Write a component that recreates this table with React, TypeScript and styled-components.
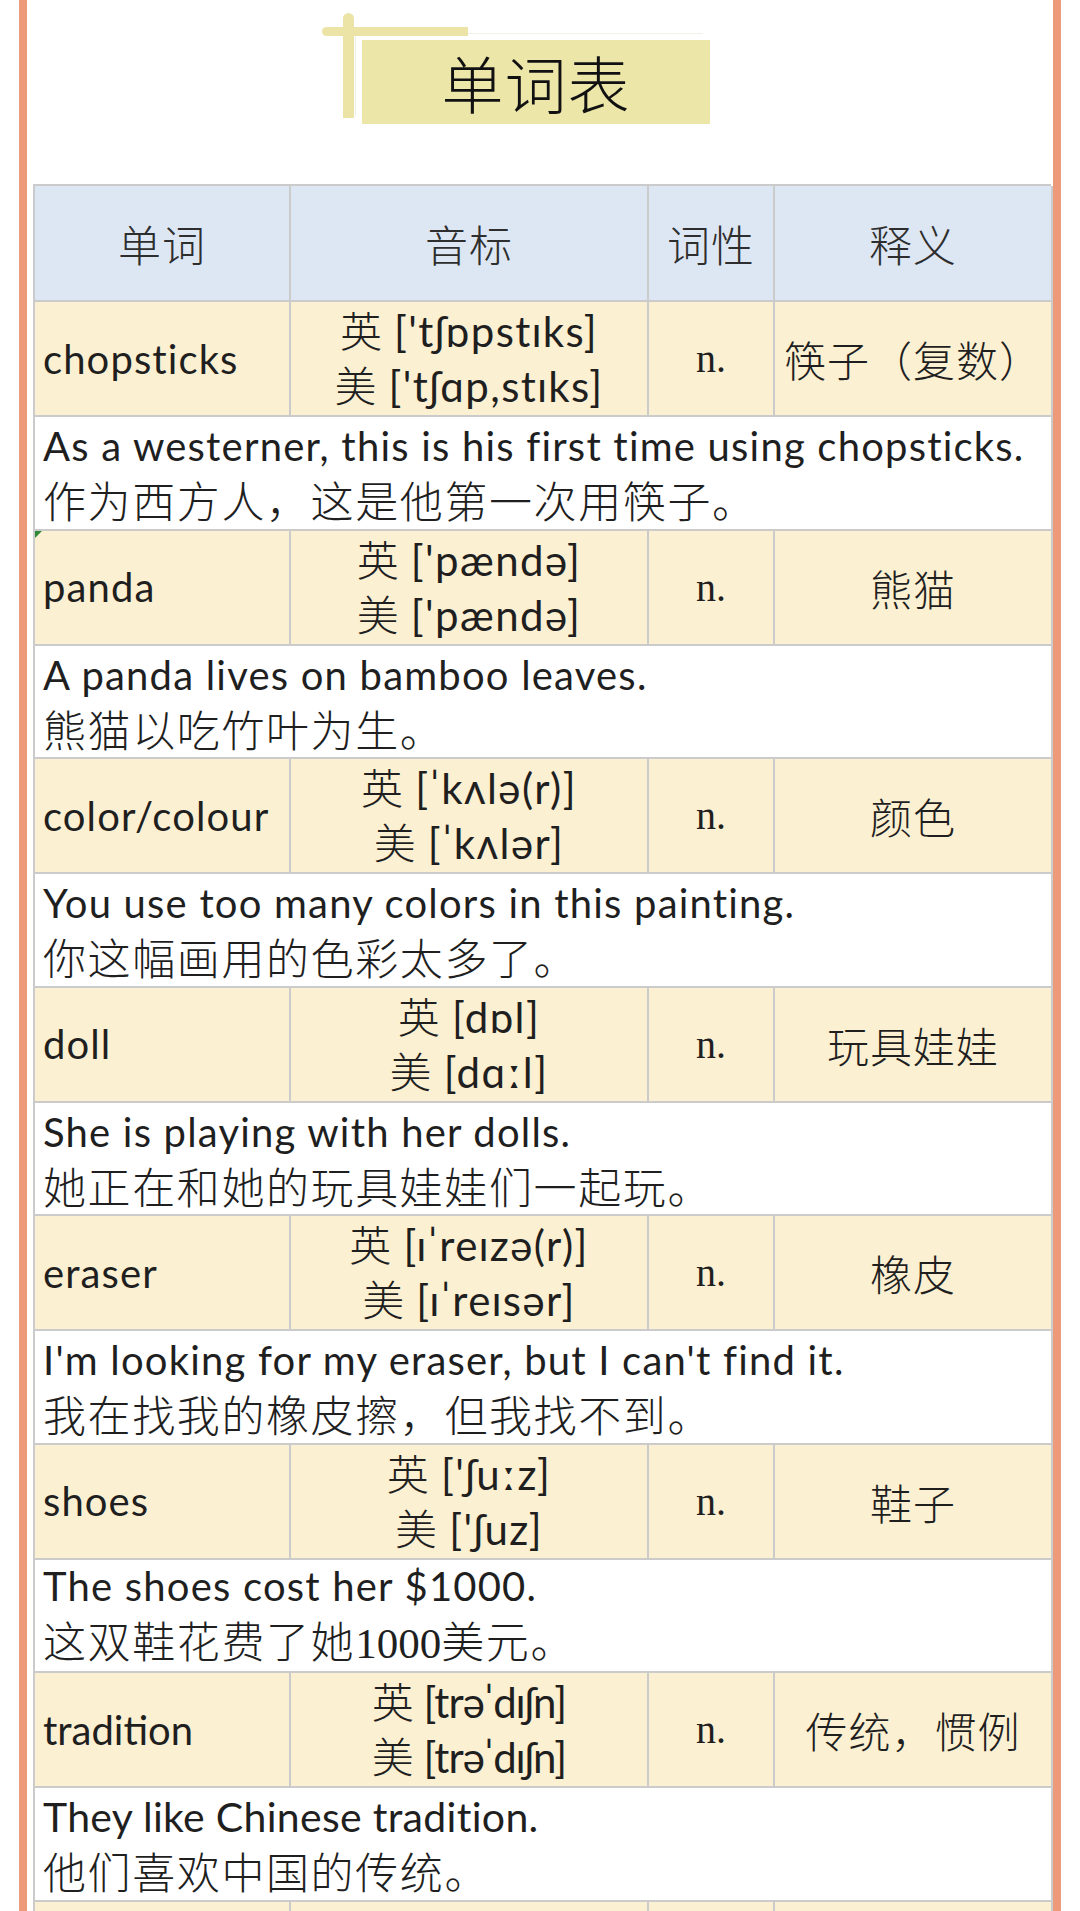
import React, { Fragment } from 'react';
import styled, { createGlobalStyle } from 'styled-components';

type Word = {
  word: string;
  uk: string;
  us: string;
  pos: string;
  meaning: string;
  en: string;
  zh: string;
  narrow?: boolean;
  flag?: boolean;
};

const words: Word[] = [
  {
    word: 'chopsticks',
    uk: "['tʃɒpstɪks]",
    us: "['tʃɑp,stɪks]",
    pos: 'n.',
    meaning: '筷子（复数）',
    en: 'As a westerner, this is his first time using chopsticks.',
    zh: '作为西方人，这是他第一次用筷子。',
  },
  {
    word: 'panda',
    uk: "['pændə]",
    us: "['pændə]",
    pos: 'n.',
    meaning: '熊猫',
    en: 'A panda lives on bamboo leaves.',
    zh: '熊猫以吃竹叶为生。',
    flag: true,
  },
  {
    word: 'color/colour',
    uk: '[ˈkʌlə(r)]',
    us: '[ˈkʌlər]',
    pos: 'n.',
    meaning: '颜色',
    en: 'You use too many colors in this painting.',
    zh: '你这幅画用的色彩太多了。',
  },
  {
    word: 'doll',
    uk: '[dɒl]',
    us: '[dɑːl]',
    pos: 'n.',
    meaning: '玩具娃娃',
    en: 'She is playing with her dolls.',
    zh: '她正在和她的玩具娃娃们一起玩。',
  },
  {
    word: 'eraser',
    uk: '[ɪˈreɪzə(r)]',
    us: '[ɪˈreɪsər]',
    pos: 'n.',
    meaning: '橡皮',
    en: "I'm looking for my eraser, but I can't find it.",
    zh: '我在找我的橡皮擦，但我找不到。',
  },
  {
    word: 'shoes',
    uk: "['ʃuːz]",
    us: "['ʃuz]",
    pos: 'n.',
    meaning: '鞋子',
    en: 'The shoes cost her $1000.',
    zh: '这双鞋花费了她1000美元。',
  },
  {
    word: 'tradition',
    uk: '[trəˈdɪʃn]',
    us: '[trəˈdɪʃn]',
    pos: 'n.',
    meaning: '传统，惯例',
    en: 'They like Chinese tradition.',
    zh: '他们喜欢中国的传统。',
    narrow: true,
  },
];

// digits inside the Chinese sentences are set in a serif face in the sheet
const renderZh = (text: string) =>
  text.split(/(\d+)/).map((part, i) =>
    /^\d+$/.test(part) ? <Num key={i}>{part}</Num> : <Fragment key={i}>{part}</Fragment>
  );

const App = () => {
  return (
    <Fragment>
      <GlobalStyle />
      <Frame>
        <TitleBar>
          <TitleBox>单词表</TitleBox>
        </TitleBar>

        <Table>
          <HeadCell>单词</HeadCell>
          <HeadCell>音标</HeadCell>
          <HeadCell>词性</HeadCell>
          <HeadCell>释义</HeadCell>

          {words.map((w) => (
            <Fragment key={w.word}>
              <WordCell $align="left" $flag={w.flag}>
                <WordText $narrow={w.narrow}>{w.word}</WordText>
              </WordCell>
              <WordCell>
                <Phonetic $narrow={w.narrow}>
                  <PhoneticLine><Lang>英</Lang> {w.uk}</PhoneticLine>
                  <PhoneticLine><Lang>美</Lang> {w.us}</PhoneticLine>
                </Phonetic>
              </WordCell>
              <WordCell>
                <PosText>{w.pos}</PosText>
              </WordCell>
              <WordCell>
                <Meaning>{w.meaning}</Meaning>
              </WordCell>
              <ExampleCell>
                <ExampleEn $narrow={w.narrow}>{w.en}</ExampleEn>
                <ExampleZh>{renderZh(w.zh)}</ExampleZh>
              </ExampleCell>
            </Fragment>
          ))}

          <WordCell $align="left" />
          <WordCell />
          <WordCell />
          <WordCell />
        </Table>
      </Frame>
    </Fragment>
  );
};

export default App;

const GlobalStyle = createGlobalStyle`
  html, body {
    margin: 0;
    padding: 0;
    background: #ffffff;
  }
  body {
    font-family: Lato, "Noto Sans CJK SC", sans-serif;
    color: #1f1f1f;
    overflow: hidden;
  }
`;

const Frame = styled.div`
  box-sizing: border-box;
  width: 1042px;
  min-height: 1911px;
  margin-left: 19px;
  padding: 0 2px 0 6px;
  border-left: 8px solid #ec9a7a;
  border-right: 8px solid #ec9a7a;
  background: #ffffff;
`;

const TitleBar = styled.div`
  display: flex;
  justify-content: center;
  height: 184px;
  padding-top: 40px;
  box-sizing: border-box;
`;

const TitleBox = styled.div`
  position: relative;
  display: flex;
  align-items: center;
  justify-content: center;
  width: 348px;
  height: 84px;
  margin-left: -12px;
  background: #ece6a9;
  font-family: "Noto Sans CJK SC", sans-serif;
  font-size: 62px;
  font-weight: 300;
  letter-spacing: 1px;
  color: #111;
  box-shadow: -6px -6px 0 0 #ffffff, -7px -7px 0 0 #f1f1ec;

  &:before {
    content: '';
    position: absolute;
    left: -19px;
    top: -27px;
    width: 11px;
    height: 105px;
    background: #ebe4a6;
    border-radius: 6px 6px 0 0;
  }

  &:after {
    content: '';
    position: absolute;
    left: -40px;
    top: -13px;
    width: 146px;
    height: 9px;
    background: #ebe4a6;
    border-radius: 5px 0 0 5px;
  }
`;

const Table = styled.div`
  display: grid;
  grid-template-columns: 256px 358px 126px 278px;
  border-top: 2px solid #cbcbcb;
  border-left: 2px solid #cbcbcb;
`;

const Cell = styled.div`
  box-sizing: border-box;
  display: flex;
  align-items: center;
  border-right: 2px solid #cbcbcb;
  border-bottom: 2px solid #cbcbcb;
`;

const HeadCell = styled(Cell)`
  justify-content: center;
  height: 116px;
  background: #dde7f3;
  font-family: "Noto Sans CJK SC", sans-serif;
  font-size: 43px;
  font-weight: 300;
  letter-spacing: 1px;
  color: #2e2e2e;
`;

const WordCell = styled(Cell)<{ $align?: 'left' | 'center'; $flag?: boolean }>`
  position: relative;
  justify-content: ${({ $align }) => ($align === 'left' ? 'flex-start' : 'center')};
  height: 115px;
  padding: 0 8px;
  background: #fcf0d2;

  &:before {
    content: '';
    display: ${({ $flag }) => ($flag ? 'block' : 'none')};
    position: absolute;
    top: 0;
    left: 0;
    border-top: 7px solid #2e8b3a;
    border-right: 7px solid transparent;
  }
`;

const WordText = styled.span<{ $narrow?: boolean }>`
  font-size: 40px;
  letter-spacing: ${({ $narrow }) => ($narrow ? '0' : '1.1px')};
`;

const Phonetic = styled.div<{ $narrow?: boolean }>`
  display: flex;
  flex-flow: column;
  align-items: center;
  gap: 3px;
  font-size: 42px;
  letter-spacing: ${({ $narrow }) => ($narrow ? '-1px' : '1.4px')};
  white-space: nowrap;
`;

const PhoneticLine = styled.div`
  height: 52px;
  line-height: 52px;
`;

const Lang = styled.span`
  display: inline-block;
  line-height: 42px;
  font-family: "Noto Sans CJK SC", sans-serif;
  font-weight: 300;
  letter-spacing: 0;
`;

const PosText = styled.span`
  font-family: "Liberation Serif", serif;
  font-size: 40px;
`;

const Meaning = styled.span`
  font-family: "Noto Sans CJK SC", sans-serif;
  font-size: 42px;
  font-weight: 300;
  letter-spacing: 1px;
  white-space: nowrap;
`;

const ExampleCell = styled(Cell)`
  grid-column: 1 / -1;
  flex-flow: column;
  align-items: flex-start;
  justify-content: center;
  height: 113.5px;
  padding: 0 8px;
  background: #ffffff;
`;

const ExampleEn = styled.div<{ $narrow?: boolean }>`
  font-size: ${({ $narrow }) => ($narrow ? '41px' : '40px')};
  line-height: 50px;
  margin-bottom: 3px;
  letter-spacing: ${({ $narrow }) => ($narrow ? '0.3px' : '1.2px')};
  white-space: nowrap;
`;

const ExampleZh = styled.div`
  font-family: "Noto Sans CJK SC", sans-serif;
  font-size: 43px;
  font-weight: 300;
  line-height: 50px;
  letter-spacing: 1.6px;
  white-space: nowrap;
`;

const Num = styled.span`
  font-family: "Liberation Serif", serif;
  letter-spacing: 0;
`;
